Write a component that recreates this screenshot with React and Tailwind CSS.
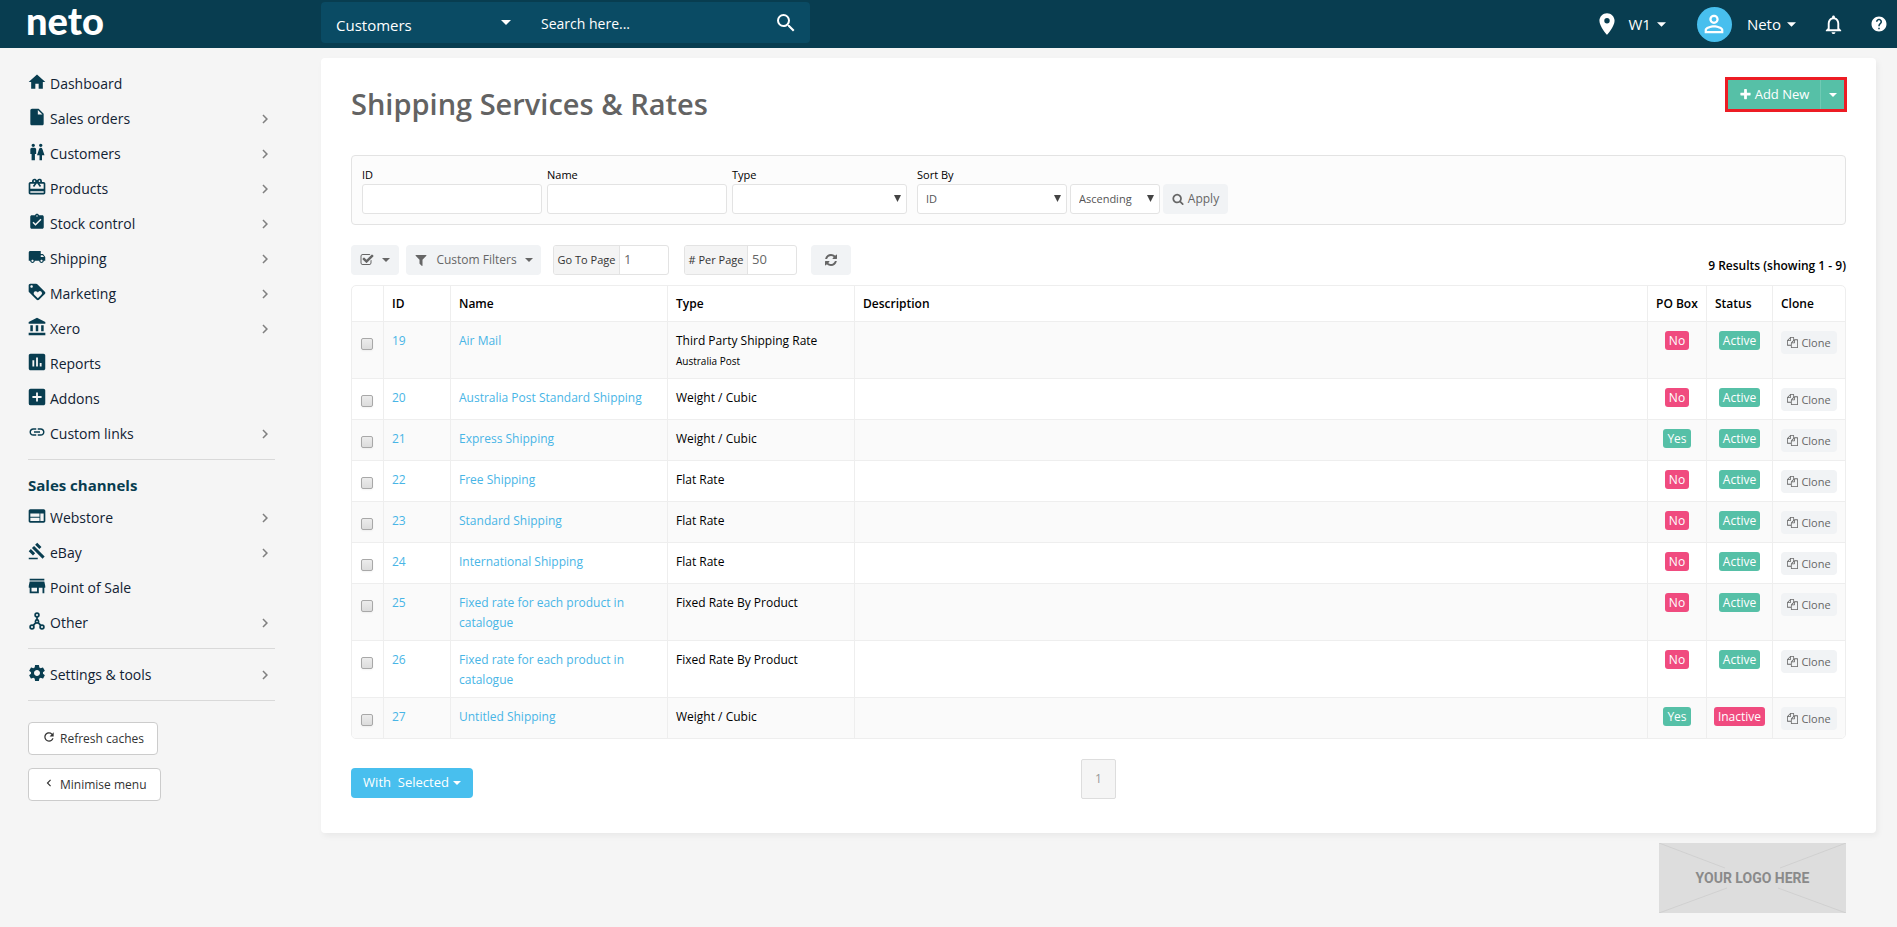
import { useState } from "react";
import {
  MdHome,
  MdInsertDriveFile,
  MdWc,
  MdCardGiftcard,
  MdAssignmentTurnedIn,
  MdLocalShipping,
  MdLoyalty,
  MdAccountBalance,
  MdAssessment,
  MdAddBox,
  MdLink,
  MdWeb,
  MdGavel,
  MdStore,
  MdSettings,
  MdRefresh,
  MdChevronLeft,
  MdChevronRight,
  MdSearch,
  MdPlace,
  MdPersonOutline,
  MdNotificationsNone,
  MdHelp,
} from "react-icons/md";

const mainMenu = [
  { label: "Dashboard", icon: MdHome },
  { label: "Sales orders", icon: MdInsertDriveFile, more: true },
  { label: "Customers", icon: MdWc, more: true },
  { label: "Products", icon: MdCardGiftcard, more: true },
  { label: "Stock control", icon: MdAssignmentTurnedIn, iconSize: "size-[18px]", more: true },
  { label: "Shipping", icon: MdLocalShipping, iconSize: "size-[18px]", more: true },
  { label: "Marketing", icon: MdLoyalty, more: true },
  { label: "Xero", icon: MdAccountBalance, more: true },
  { label: "Reports", icon: MdAssessment, iconSize: "size-[22px]" },
  { label: "Addons", icon: MdAddBox, iconSize: "size-[22px]" },
  { label: "Custom links", icon: MdLink, iconSize: "size-[18px]", more: true },
];

const channelMenu = [
  { label: "Webstore", icon: MdWeb, more: true },
  { label: "eBay", icon: MdGavel, iconSize: "size-[18px]", more: true },
  { label: "Point of Sale", icon: MdStore, iconSize: "size-[22px]" },
  { label: "Other", icon: NodesIcon, iconSize: "size-[18px]", more: true },
];

const services = [
  { id: 19, name: "Air Mail", type: "Third Party Shipping Rate", note: "Australia Post", poBox: false, active: true },
  { id: 20, name: "Australia Post Standard Shipping", type: "Weight / Cubic", poBox: false, active: true },
  { id: 21, name: "Express Shipping", type: "Weight / Cubic", poBox: true, active: true },
  { id: 22, name: "Free Shipping", type: "Flat Rate", poBox: false, active: true },
  { id: 23, name: "Standard Shipping", type: "Flat Rate", poBox: false, active: true },
  { id: 24, name: "International Shipping", type: "Flat Rate", poBox: false, active: true },
  { id: 25, name: "Fixed rate for each product in catalogue", type: "Fixed Rate By Product", poBox: false, active: true },
  { id: 26, name: "Fixed rate for each product in catalogue", type: "Fixed Rate By Product", poBox: false, active: true },
  { id: 27, name: "Untitled Shipping", type: "Weight / Cubic", poBox: true, active: false },
];

const glyphs = {
  check:
    "M1472 930v318q0 119-84.5 203.5t-203.5 84.5h-832q-119 0-203.5-84.5t-84.5-203.5v-832q0-119 84.5-203.5t203.5-84.5h832q63 0 117 25 15 7 18 23 3 17-9 29l-49 49q-10 10-23 10-3 0-9-2-23-6-45-6h-832q-66 0-113 47t-47 113v832q0 66 47 113t113 47h832q66 0 113-47t47-113v-254q0-13 9-22l64-64q10-10 23-10 6 0 12 3 20 8 20 29zm231-489l-814 814q-24 24-57 24t-57-24l-430-430q-24-24-24-57t24-57l110-110q24-24 57-24t57 24l263 263 647-647q24-24 57-24t57 24l110 110q24 24 24 57t-24 57z",
  filter:
    "M1595 295q17 41-14 70l-493 493v742q0 42-39 59-13 5-25 5-27 0-45-19l-256-256q-19-19-19-45v-486l-493-493q-31-29-14-70 17-39 59-39h1280q42 0 59 39z",
  refresh:
    "M1639 1056q0 5-1 7-64 268-268 434.5t-478 166.5q-146 0-282.5-55t-243.5-157l-129 129q-19 19-45 19t-45-19-19-45v-448q0-26 19-45t45-19h448q26 0 45 19t19 45-19 45l-137 137q71 66 161 102t187 36q134 0 250-65t186-179q11-17 53-117 8-23 30-23h192q13 0 22.5 9.5t9.5 22.5zm25-800v448q0 26-19 45t-45 19h-448q-26 0-45-19t-19-45 19-45l138-138q-148-137-349-137-134 0-250 65t-186 179q-11 17-53 117-8 23-30 23h-199q-13 0-22.5-9.5t-9.5-22.5v-7q65-268 270-434.5t480-166.5q146 0 284 55.5t245 156.5l130-129q19-19 45-19t45 19 19 45z",
  search:
    "M1216 832q0-185-131.5-316.5t-316.5-131.5-316.5 131.5-131.5 316.5 131.5 316.5 316.5 131.5 316.5-131.5 131.5-316.5zm512 832q0 52-38 90t-90 38q-54 0-90-38l-343-342q-179 124-399 124-143 0-273.5-55.5t-225-150-150-225-55.5-273.5 55.5-273.5 150-225 225-150 273.5-55.5 273.5 55.5 225 150 150 225 55.5 273.5q0 220-124 399l343 343q37 37 37 90z",
  plus:
    "M1600 736v192q0 40-28 68t-68 28h-416v416q0 40-28 68t-68 28h-192q-40 0-68-28t-28-68v-416h-416q-40 0-68-28t-28-68v-192q0-40 28-68t68-28h416v-416q0-40 28-68t68-28h192q40 0 68 28t28 68v416h416q40 0 68 28t28 68z",
  copy:
    "M1696 384q40 0 68 28t28 68v1216q0 40-28 68t-68 28h-960q-40 0-68-28t-28-68v-288h-544q-40 0-68-28t-28-68v-672q0-40 20-88t48-76l408-408q28-28 76-48t88-20h416q40 0 68 28t28 68v328q68-40 128-40h416zm-544 213l-299 299h299v-299zm-640-384l-299 299h299v-299zm196 647l316-316v-416h-384v416q0 40-28 68t-68 28h-416v640h512v-256q0-40 20-88t48-76zm956 804v-1152h-384v416q0 40-28 68t-68 28h-416v640h896z",
};

function Glyph({ name, className }) {
  return (
    <svg viewBox="0 0 1792 1792" fill="currentColor" className={className} aria-hidden="true">
      <path d={glyphs[name]} />
    </svg>
  );
}

function NodesIcon({ className }) {
  return (
    <svg viewBox="0 0 18 18" fill="none" stroke="currentColor" strokeWidth="1.7" className={className} aria-hidden="true">
      <circle cx="9" cy="3" r="1.9" />
      <circle cx="9" cy="9.5" r="1.6" />
      <circle cx="4" cy="15" r="1.9" />
      <circle cx="14" cy="15" r="1.9" />
      <path d="M9 5v3M7.8 10.6 5.3 13.4M10.2 10.6l2.5 2.8" />
    </svg>
  );
}

const Caret = ({ className = "" }) => (
  <svg viewBox="0 0 10 5" fill="currentColor" className={`shrink-0 ${className}`} aria-hidden="true">
    <path d="M0 0h10L5 5z" />
  </svg>
);

const MenuItem = ({ label, icon: Icon, iconSize = "size-5", more }) => (
  <a href="#" className="flex h-[35px] items-center text-sm text-[#123]">
    <span className="mr-[5px] mb-[3px] flex w-[17px] justify-center text-[#083d50]">
      <Icon className={`shrink-0 ${iconSize}`} />
    </span>
    <span className="grow">{label}</span>
    {more && <MdChevronRight className="mr-px size-[18px] text-[#808080]" />}
  </a>
);

const SelectBox = ({ id, label, options, className = "" }) => (
  <div className={`relative ${className}`}>
    <select
      id={id}
      aria-label={label}
      className="block h-[30px] w-full appearance-none rounded-[3px] border border-[#e3e3e3] bg-white pl-2 text-[11px] text-[#555]"
    >
      {options.map((option) => (
        <option key={option}>{option}</option>
      ))}
    </select>
    <svg viewBox="0 0 6 6" className="pointer-events-none absolute top-[11px] right-[6px] size-[7px] text-[#444]" fill="currentColor" aria-hidden="true">
      <path d="M0 0h6L3 6z" />
    </svg>
  </div>
);

const Badge = ({ good, children }) => (
  <span
    className={`inline-block h-[19px] rounded-[3px] px-1 text-xs leading-[19px] font-medium text-white ${
      good ? "bg-[#56c0a7]" : "bg-[#f04b7f]"
    }`}
  >
    {children}
  </span>
);

const TopBar = () => (
  <header className="flex h-12 items-center bg-[#083d50] text-white">
    <div className="w-[321px] shrink-0 pl-[26px]">
      <a href="#" className="block pb-2 font-['Lato'] text-[38px] leading-[40px] font-black">
        neto
      </a>
    </div>
    <div className="mb-[3px] flex h-[41px] w-[489px] items-center rounded bg-[#0a4b64]">
      <div className="relative w-[190px]">
        <select aria-label="Search in" className="block h-[41px] w-full appearance-none pt-[5px] pl-[15px] text-[15px]">
          <option>Customers</option>
          <option>Products</option>
        </select>
        <Caret className="pointer-events-none absolute top-[18px] right-0 h-[5px] w-[10px]" />
      </div>
      <input
        type="text"
        aria-label="Search"
        placeholder="Search here..."
        className="ml-[30px] h-[41px] w-[220px] bg-transparent pt-[2px] text-sm placeholder:text-white"
      />
      <button aria-label="Run search" className="ml-[13px]">
        <MdSearch className="size-6" />
      </button>
    </div>
    <div className="ml-auto flex items-center text-[15px]">
      <MdPlace className="mr-2 size-[26px]" />
      <button className="flex items-center gap-[6px]">
        W1 <Caret className="h-[5px] w-[9px]" />
      </button>
      <span className="ml-[31px] flex size-[35px] items-center justify-center rounded-full bg-[#48bfee]">
        <MdPersonOutline className="size-7" />
      </span>
      <button className="ml-[15px] flex items-center gap-[6px]">
        Neto <Caret className="h-[5px] w-[9px]" />
      </button>
      <MdNotificationsNone className="ml-[26px] size-[23px]" />
      <MdHelp className="mr-[9px] ml-[25px] size-[18px]" />
    </div>
  </header>
);

const Sidebar = () => (
  <nav className="w-[321px] shrink-0 pt-[18px] pr-[46px] pl-7">
    {mainMenu.map((item) => (
      <MenuItem key={item.label} {...item} />
    ))}
    <div className="mt-2 border-t border-[#d9d9d9] pt-4">
      <h2 className="text-[15px] leading-[18px] font-bold text-[#083d50]">Sales channels</h2>
      <div className="mt-[6px]">
        {channelMenu.map((item) => (
          <MenuItem key={item.label} {...item} />
        ))}
      </div>
    </div>
    <div className="mt-2 border-y border-[#d9d9d9] pt-2 pb-2">
      <MenuItem label="Settings & tools" icon={MdSettings} more />
    </div>
    <button className="mt-[21px] flex h-[33px] items-center rounded border border-[#ccc] bg-white px-[13px] text-xs text-[#333]">
      <MdRefresh className="mr-1 mb-1 size-[14px]" /> Refresh caches
    </button>
    <button className="mt-[13px] flex h-[33px] items-center rounded border border-[#ccc] bg-white px-[13px] text-xs text-[#333]">
      <MdChevronLeft className="mr-1 mb-1 size-[14px]" /> Minimise menu
    </button>
  </nav>
);

const Filters = () => (
  <form className="flex h-[70px] items-end rounded border border-[#e3e3e3] bg-[#fcfcfc] px-[10px] pb-[10px] text-[11px] leading-[18px] text-black">
    <div className="w-[180px]">
      <label htmlFor="f-id" className="block">ID</label>
      <input id="f-id" type="text" className="block h-[30px] w-full rounded-[3px] border border-[#e3e3e3] bg-white px-2" />
    </div>
    <div className="ml-[5px] w-[180px]">
      <label htmlFor="f-name" className="block">Name</label>
      <input id="f-name" type="text" className="block h-[30px] w-full rounded-[3px] border border-[#e3e3e3] bg-white px-2" />
    </div>
    <div className="ml-[5px] w-[175px]">
      <label htmlFor="f-type" className="block">Type</label>
      <SelectBox id="f-type" options={[""]} />
    </div>
    <div className="ml-[10px] w-[150px]">
      <label htmlFor="f-sort" className="block">Sort By</label>
      <SelectBox id="f-sort" options={["ID", "Name"]} />
    </div>
    <SelectBox id="f-order" label="Sort order" options={["Ascending", "Descending"]} className="ml-[3px] w-[90px]" />
    <button type="button" className="ml-[3px] flex h-[30px] w-[65px] items-center justify-center gap-1 rounded bg-[#f1f3f5] text-xs text-[#666]">
      <Glyph name="search" className="size-3" /> Apply
    </button>
  </form>
);

const Toolbar = () => (
  <div className="mt-5 flex items-center text-[13px] text-[#666]">
    <button aria-label="Select rows" className="flex h-[30px] w-12 items-center justify-center gap-2 rounded bg-[#f1f3f5]">
      <Glyph name="check" className="size-[14px]" />
      <Caret className="h-1 w-2" />
    </button>
    <button className="ml-[7px] flex h-[30px] w-[135px] items-center justify-center gap-2 rounded bg-[#f1f3f5] text-xs">
      <Glyph name="filter" className="size-[14px]" /> Custom Filters
      <Caret className="h-1 w-2" />
    </button>
    <div className="ml-3 flex h-[30px] w-[116px] overflow-hidden rounded-[3px] border border-[#e3e3e3] bg-white">
      <label htmlFor="page" className="flex w-[66px] shrink-0 items-center justify-center border-r border-[#e3e3e3] bg-[#f4f4f4] text-[11px] whitespace-nowrap text-[#333]">
        Go To Page
      </label>
      <input id="page" type="text" defaultValue="1" className="w-full min-w-0 px-1" />
    </div>
    <div className="ml-[15px] flex h-[30px] w-[113px] overflow-hidden rounded-[3px] border border-[#e3e3e3] bg-white">
      <label htmlFor="per-page" className="flex w-[63px] shrink-0 items-center justify-center border-r border-[#e3e3e3] bg-[#f4f4f4] text-[11px] whitespace-nowrap text-[#333]">
        # Per Page
      </label>
      <input id="per-page" type="text" defaultValue="50" className="w-full min-w-0 px-1" />
    </div>
    <button aria-label="Refresh list" className="ml-[14px] flex h-[30px] w-10 items-center justify-center rounded bg-[#f1f3f5]">
      <Glyph name="refresh" className="size-[14px]" />
    </button>
    <strong className="mt-[11px] ml-auto text-xs font-semibold text-black">9 Results (showing 1 - 9)</strong>
  </div>
);

const ServicesTable = () => {
  const [selected, setSelected] = useState([]);

  const toggle = (id) => {
    setSelected(selected.includes(id) ? selected.filter((s) => s !== id) : [...selected, id]);
  };

  return (
    <div className="mt-[10px] overflow-hidden rounded-[5px] border border-[#eee]">
      <table className="w-full table-fixed border-separate border-spacing-0 text-left text-xs leading-5 text-black [&_td]:border-r [&_td]:border-b [&_td]:border-[#eee] [&_td:last-child]:border-r-0 [&_th]:border-r [&_th]:border-b [&_th]:border-[#eee] [&_th]:px-2 [&_th]:font-semibold [&_th:last-child]:border-r-0 [&_tr:last-child>td]:border-b-0">
        <thead>
          <tr className="h-9">
            <th className="w-8" aria-label="Selected"></th>
            <th className="w-[67px]">ID</th>
            <th className="w-[217px]">Name</th>
            <th className="w-[187px]">Type</th>
            <th>Description</th>
            <th className="w-[59px] whitespace-nowrap">PO Box</th>
            <th className="w-[66px]">Status</th>
            <th className="w-[72px]">Clone</th>
          </tr>
        </thead>
        <tbody>
          {services.map((s) => (
            <tr key={s.id} className="h-[41px] align-top last:h-10 odd:bg-[#fafafa] [&>td]:pt-[9px] [&>td]:pb-[7px]">
              <td className="px-[9px]">
                <input
                  type="checkbox"
                  aria-label={`Select ${s.name}`}
                  checked={selected.includes(s.id)}
                  onChange={() => toggle(s.id)}
                  className="mt-[7px] block size-3 appearance-none rounded-[2px] border border-[#a8a8a8] bg-linear-to-b from-[#ececec] to-[#dcdcdc] shadow-xs checked:bg-[#48bfee]"
                />
              </td>
              <td className="px-2">
                <a href="#" className="text-[#48b5e6]">{s.id}</a>
              </td>
              <td className="px-2">
                <a href="#" className="text-[#48b5e6]">{s.name}</a>
              </td>
              <td className="px-2">
                {s.type}
                {s.note && <div className="text-[10px] leading-5">{s.note}</div>}
              </td>
              <td className="px-2"></td>
              <td className="text-center leading-[19px]">
                <Badge good={s.poBox}>{s.poBox ? "Yes" : "No"}</Badge>
              </td>
              <td className="text-center leading-[19px]">
                <Badge good={s.active}>{s.active ? "Active" : "Inactive"}</Badge>
              </td>
              <td className="px-2">
                <button className="flex h-[23px] w-14 items-center justify-center gap-[3px] rounded bg-[#f1f3f5] text-[11px] text-[#666]">
                  <Glyph name="copy" className="size-[11px]" /> Clone
                </button>
              </td>
            </tr>
          ))}
        </tbody>
      </table>
    </div>
  );
};

const App = () => {
  return (
    <div className="min-h-screen bg-[#f5f5f5] font-['Open_Sans','Noto_Sans',sans-serif]">
      <TopBar />
      <div className="flex items-start">
        <Sidebar />
        <div className="mr-[21px] min-w-0 grow pt-[10px]">
          <main className="rounded bg-white px-[30px] pb-[34px] shadow-[2px_3px_6px_rgba(0,0,0,0.05)]">
            <div className="flex h-[97px] justify-between pt-[19px]">
              <h1 className="pt-2 text-[29px] leading-[38px] font-semibold text-[#636363]">Shipping Services &amp; Rates</h1>
              <div className="-mr-px flex h-[35px] border-3 border-[#ed1c24] bg-[#56c0a7] text-[13px] text-white">
                <button className="flex w-[93px] items-center justify-center gap-[3px] border-r border-[#6fcab4] font-medium">
                  <Glyph name="plus" className="size-[13px]" /> Add New
                </button>
                <button aria-label="More add options" className="flex w-[23px] items-center justify-center">
                  <Caret className="h-1 w-2" />
                </button>
              </div>
            </div>
            <Filters />
            <Toolbar />
            <ServicesTable />
            <div className="mt-5 grid grid-cols-3 items-start">
              <button className="mt-[9px] flex h-[30px] w-[122px] items-center justify-center gap-1 rounded bg-[#48bfee] text-[13px] font-medium whitespace-pre text-white">
                {"With  Selected"}
                <Caret className="h-1 w-2" />
              </button>
              <button className="flex h-10 w-[35px] items-center justify-center justify-self-center rounded-[2px] border border-[#ddd] bg-[#f5f5f5] text-xs text-[#999]">
                1
              </button>
            </div>
          </main>
          <footer className="mt-[10px] mr-[30px] flex justify-end">
            <div className="relative flex h-[70px] w-[187px] items-center justify-center bg-[#ddd]">
              <svg viewBox="0 0 187 70" className="absolute inset-0 size-full" stroke="#d0d0d0" aria-hidden="true">
                <path d="M0 0l66 25M187 0l-66 25M0 70l68-25M187 70l-68-25" />
              </svg>
              <span className="relative font-['Roboto'] text-sm font-bold text-[#8a8a8a]">YOUR LOGO HERE</span>
            </div>
          </footer>
        </div>
      </div>
    </div>
  );
};

export default App;
